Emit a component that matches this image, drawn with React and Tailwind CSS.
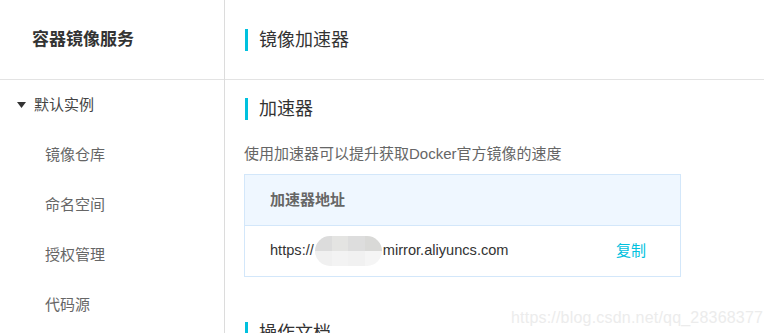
import React from 'react';

const font = { fontFamily: '"Liberation Sans", "Noto Sans CJK SC", sans-serif' };

const menu = ['镜像仓库', '命名空间', '授权管理', '代码源'];

const SectionTitle = ({ text, className = '' }) => (
  <div className={`flex items-center h-[22px] shrink-0 ${className}`}>
    <span className="w-[3px] h-[22px] bg-[#00c1de]" />
    <span className="ml-[11px] text-[18px] leading-[22px] text-[#333]">{text}</span>
  </div>
);

const Blur = () => (
  <span className="inline-flex flex-col w-[67px] h-[30px] rounded-full overflow-hidden align-middle mx-[1px]">
    <span className="flex h-[15px]">
      <span className="flex-1 bg-[#dcdcdc]" />
      <span className="flex-1 bg-[#e4e4e2]" />
      <span className="flex-1 bg-[#dddddd]" />
      <span className="flex-1 bg-[#d9d9d7]" />
    </span>
    <span className="flex h-[15px]">
      <span className="flex-1 bg-[#f0f0f0]" />
      <span className="flex-1 bg-[#f3f3f3]" />
      <span className="flex-1 bg-[#f1f1f1]" />
      <span className="flex-1 bg-[#f5f5f5]" />
    </span>
  </span>
);

export default function App() {
  return (
    <div style={font} className="relative w-[764px] h-[333px] overflow-hidden bg-white flex">
      {/* sidebar */}
      <div className="w-[225px] shrink-0 border-r border-[#dcdcdc] flex flex-col">
        <div className="h-[80px] shrink-0 border-b border-[#e3e3e3] flex items-center pl-[32px]">
          <span className="text-[17px] font-bold text-[#333]">容器镜像服务</span>
        </div>
        <div className="h-[50px] shrink-0 flex items-center pl-[17px]">
          <svg width="9" height="6" viewBox="0 0 9 6" className="mr-[8px]">
            <path d="M0 0 H9 L4.5 6 Z" fill="#333" />
          </svg>
          <span className="text-[15px] text-[#444]">默认实例</span>
        </div>
        {menu.map((m) => (
          <div key={m} className="h-[50px] shrink-0 flex items-center pl-[45px] text-[15px] text-[#666]">
            {m}
          </div>
        ))}
      </div>

      {/* main */}
      <div className="flex-1 flex flex-col">
        <div className="h-[80px] shrink-0 border-b border-[#e3e3e3] flex items-center pl-[20px]">
          <SectionTitle text="镜像加速器" />
        </div>
        <div className="pt-[18px] pl-[19px] flex flex-col">
          <SectionTitle text="加速器" className="ml-px" />
          <p className="mt-[24px] text-[15px] leading-[20px] text-[#666]">
            使用加速器可以提升获取Docker官方镜像的速度
          </p>
          <div className="mt-[10px] w-[437px] shrink-0 border border-[#d3e7fa]">
            <div className="h-[51px] bg-[#eff7ff] border-b border-[#d3e7fa] flex items-center pl-[25px] text-[15px] font-semibold text-[#666]">
              加速器地址
            </div>
            <div className="h-[50px] flex items-center justify-between pl-[25px] pr-[34px] text-[15px]">
              <span className="flex items-center text-[14.6px] text-[#333]">
                https://
                <Blur />
                mirror.aliyuncs.com
              </span>
              <span className="text-[#00c1de]">复制</span>
            </div>
          </div>
          <SectionTitle text="操作文档" className="ml-px mt-[45px]" />
        </div>
      </div>

      {/* watermark */}
      <span className="absolute left-[511px] top-[306px] text-[16px] text-[#ececec] tracking-[0.2px]">
        https://blog.csdn.net/qq_28368377
      </span>
    </div>
  );
}
